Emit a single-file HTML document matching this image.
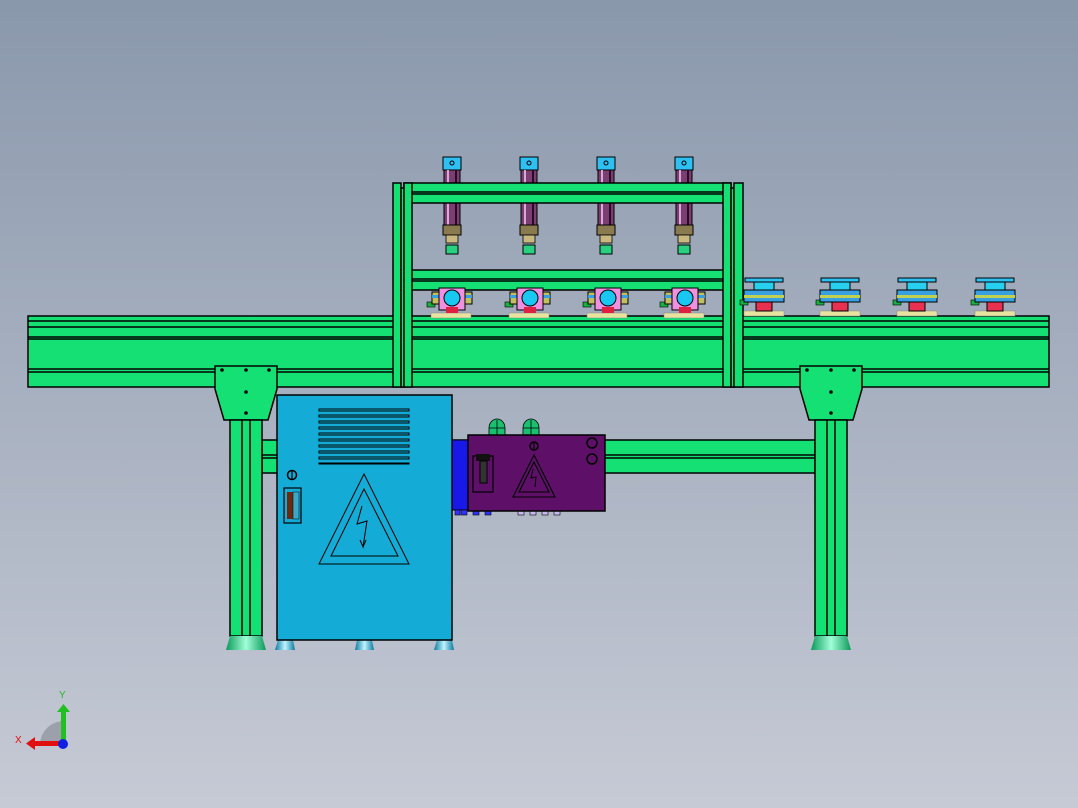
<!DOCTYPE html>
<html><head><meta charset="utf-8"><style>
html,body{margin:0;padding:0;width:1078px;height:808px;overflow:hidden}
svg{display:block}
</style></head><body>
<svg width="1078" height="808" viewBox="0 0 1078 808" xmlns="http://www.w3.org/2000/svg">
<defs>
<linearGradient id="bg" x1="0" y1="0" x2="0" y2="1">
<stop offset="0" stop-color="#8a98ac"/><stop offset="1" stop-color="#c6cad5"/>
</linearGradient>
<linearGradient id="foot" x1="0" x2="1"><stop offset="0" stop-color="#0c9a5a"/><stop offset="0.5" stop-color="#a0ffd8"/><stop offset="1" stop-color="#0c9a5a"/></linearGradient>
<linearGradient id="bfoot" x1="0" x2="1"><stop offset="0" stop-color="#0a7aa0"/><stop offset="0.5" stop-color="#c0f4ff"/><stop offset="1" stop-color="#0a7aa0"/></linearGradient>
<g id="cyl">
<rect x="0" y="0" width="18" height="13" fill="#2ec0f0" stroke="#000" stroke-width="1"/>
<circle cx="9" cy="6" r="2" fill="none" stroke="#000" stroke-width="1"/>
<rect x="1" y="13" width="16" height="62" fill="#7a3e70" stroke="#000" stroke-width="1"/>
<rect x="4" y="13" width="2" height="62" fill="#d7a8d8"/>
<rect x="12" y="13" width="2" height="62" fill="#2a0a28"/>
<rect x="0" y="68" width="18" height="10" fill="#8a7a50" stroke="#000" stroke-width="1"/>
<rect x="3" y="78" width="12" height="8" fill="#c8b880" stroke="#000" stroke-width="0.8"/>
<rect x="3" y="88" width="12" height="9" fill="#28d080" stroke="#000" stroke-width="1"/>
</g>
<g id="fix1">
<rect x="0" y="29" width="40" height="5" fill="#e8e4a0" stroke="#888" stroke-width="0.5"/>
<rect x="-4" y="18" width="8" height="5" fill="#18b040" stroke="#000" stroke-width="0.6"/>
<rect x="1" y="8" width="40" height="12" fill="#c0c060" stroke="#000" stroke-width="1"/>
<rect x="1" y="11" width="40" height="3" fill="#38a0e0"/>
<rect x="8" y="4" width="26" height="22" fill="#f090e0" stroke="#000" stroke-width="1"/>
<circle cx="21" cy="14" r="8" fill="#18c8f0" stroke="#000" stroke-width="1"/>
<rect x="15" y="23" width="12" height="6" fill="#e02040"/>
</g>
<g id="fix2">
<rect x="0" y="33" width="40" height="5" fill="#e8e4a0" stroke="#888" stroke-width="0.5"/>
<rect x="-4" y="22" width="8" height="5" fill="#18b040" stroke="#000" stroke-width="0.6"/>
<rect x="1" y="0" width="38" height="4" fill="#2ec0f0" stroke="#000" stroke-width="1"/>
<rect x="10" y="4" width="20" height="8" fill="#28d0f0" stroke="#000" stroke-width="1"/>
<rect x="0" y="12" width="40" height="12" fill="#38a0e0" stroke="#000" stroke-width="1"/>
<rect x="0" y="17" width="40" height="3" fill="#c0d050"/>
<rect x="12" y="24" width="16" height="9" fill="#e83050" stroke="#000" stroke-width="1"/>
</g>
</defs>
<rect width="1078" height="808" fill="url(#bg)"/>

<use href="#cyl" x="443" y="157"/>
<use href="#cyl" x="520" y="157"/>
<use href="#cyl" x="597" y="157"/>
<use href="#cyl" x="675" y="157"/>

<g stroke="#000" stroke-width="1.5">
<rect x="28" y="316" width="1021" height="71" fill="#14e074"/>
<line x1="28" y1="321" x2="1049" y2="321"/>
<line x1="28" y1="327" x2="1049" y2="327"/>
<line x1="28" y1="337" x2="1049" y2="337"/>
<line x1="28" y1="339" x2="1049" y2="339"/>
<line x1="28" y1="369" x2="1049" y2="369"/>
<line x1="28" y1="372" x2="1049" y2="372"/>
</g>

<g fill="#14e074" stroke="#000" stroke-width="1.5">
<rect x="404" y="183" width="327" height="20"/>
<line x1="404" y1="192" x2="731" y2="192"/><line x1="404" y1="194" x2="731" y2="194"/>
<rect x="404" y="270" width="327" height="20"/>
<line x1="404" y1="279" x2="731" y2="279"/><line x1="404" y1="281" x2="731" y2="281"/>
<rect x="393" y="183" width="8" height="204"/>
<rect x="401" y="188" width="3" height="199"/>
<rect x="404" y="183" width="8" height="204"/>
<rect x="723" y="183" width="8" height="204"/>
<rect x="731" y="188" width="3" height="199"/>
<rect x="734" y="183" width="9" height="204"/>
</g>

<use href="#fix1" x="431" y="284"/>
<use href="#fix1" x="509" y="284"/>
<use href="#fix1" x="587" y="284"/>
<use href="#fix1" x="664" y="284"/>
<use href="#fix2" x="744" y="278"/>
<use href="#fix2" x="820" y="278"/>
<use href="#fix2" x="897" y="278"/>
<use href="#fix2" x="975" y="278"/>

<g fill="#14e074" stroke="#000" stroke-width="1.5">
<rect x="262" y="440" width="553" height="33"/>
<line x1="262" y1="455" x2="815" y2="455"/><line x1="262" y1="458" x2="815" y2="458"/>
</g>

<g fill="#14e074" stroke="#000" stroke-width="1.5">
<path d="M215 366 H277 V389 L268 420 H224 L215 389 Z"/>
<rect x="230" y="420" width="32" height="216"/>
<line x1="242" y1="420" x2="242" y2="636"/><line x1="250" y1="420" x2="250" y2="636"/>
<path d="M800 366 H862 V389 L853 420 H809 L800 389 Z"/>
<rect x="815" y="420" width="32" height="216"/>
<line x1="827" y1="420" x2="827" y2="636"/><line x1="835" y1="420" x2="835" y2="636"/>
</g>
<path d="M230 636 H262 L266 650 H226 Z" fill="url(#foot)"/>
<path d="M815 636 H847 L851 650 H811 Z" fill="url(#foot)"/>
<g fill="#000"><circle cx="222" cy="370" r="1.8"/><circle cx="246" cy="370" r="1.8"/><circle cx="269" cy="370" r="1.8"/><circle cx="246" cy="392" r="1.8"/><circle cx="246" cy="413" r="1.8"/>
<circle cx="807" cy="370" r="1.8"/><circle cx="831" cy="370" r="1.8"/><circle cx="854" cy="370" r="1.8"/><circle cx="831" cy="392" r="1.8"/><circle cx="831" cy="413" r="1.8"/></g>

<rect x="452" y="440" width="18" height="70" fill="#1818e8" stroke="#000" stroke-width="1"/>
<g fill="#3030ff" stroke="#000" stroke-width="0.6"><rect x="455" y="510" width="5" height="5"/><rect x="461" y="510" width="6" height="5"/><rect x="473" y="510" width="6" height="5"/><rect x="485" y="510" width="6" height="5"/></g>
<g fill="#c8b8f0" stroke="#000" stroke-width="0.6"><rect x="518" y="510" width="6" height="5"/><rect x="530" y="510" width="6" height="5"/><rect x="542" y="510" width="6" height="5"/><rect x="554" y="510" width="6" height="5"/></g>
<g fill="#18c070" stroke="#000" stroke-width="0.8">
<path d="M489 435 V428 A8 9 0 0 1 505 428 V435 Z"/>
<path d="M523 435 V428 A8 9 0 0 1 539 428 V435 Z"/>
<path d="M497 420 V435 M489 428 H505 M531 420 V435 M523 428 H539" fill="none"/>
</g>

<rect x="468" y="435" width="137" height="76" fill="#5e1068" stroke="#000" stroke-width="1.5"/>
<rect x="473" y="456" width="20" height="36" fill="none" stroke="#000" stroke-width="1.2"/>
<rect x="476" y="454" width="14" height="7" fill="#111"/>
<rect x="480" y="461" width="7" height="22" fill="#333" stroke="#000"/>
<path d="M534 455 L513 497 H555 Z M534 462 L519 492 H549 Z" fill="none" stroke="#000" stroke-width="1.1"/>
<path d="M533 469 L531 478 L536 477 L535 487" fill="none" stroke="#000" stroke-width="1"/>
<circle cx="534" cy="446" r="4" fill="none" stroke="#000" stroke-width="1.5"/><line x1="534" y1="442" x2="534" y2="450" stroke="#000" stroke-width="1.2"/>
<circle cx="592" cy="443" r="5" fill="none" stroke="#000" stroke-width="1.5"/>
<circle cx="592" cy="459" r="5" fill="none" stroke="#000" stroke-width="1.5"/>

<path d="M278 640 H293 L295 650 H275 Z" fill="url(#bfoot)"/>
<path d="M357 640 H372 L374 650 H355 Z" fill="url(#bfoot)"/>
<path d="M437 640 H452 L454 650 H434 Z" fill="url(#bfoot)"/>
<rect x="277" y="395" width="175" height="245" fill="#14acd6" stroke="#000" stroke-width="1.5"/>
<g fill="none" stroke="#000" stroke-width="1">
<rect x="319" y="409" width="90" height="2"/><rect x="319" y="415" width="90" height="2"/><rect x="319" y="421" width="90" height="2"/><rect x="319" y="427" width="90" height="2"/><rect x="319" y="433" width="90" height="2"/><rect x="319" y="439" width="90" height="2"/><rect x="319" y="445" width="90" height="2"/><rect x="319" y="451" width="90" height="2"/><rect x="319" y="457" width="90" height="2"/><rect x="319" y="463" width="90" height="1"/>
<path d="M364 474 L319 564 H409 Z M364 489 L331 556 H398 Z"/>
<path d="M362 506 L357 524 L367 521 L363 547 L360 540 M363 547 L366 540"/>
</g>
<circle cx="292" cy="475" r="4.5" fill="none" stroke="#000" stroke-width="1.5"/><line x1="292" y1="470" x2="292" y2="480" stroke="#000" stroke-width="1.2"/>
<rect x="284" y="488" width="17" height="35" fill="#14acd6" stroke="#000" stroke-width="1.2"/>
<rect x="287" y="492" width="6" height="27" fill="#6a2a10"/>
<rect x="293" y="492" width="6" height="27" fill="#3aa8c8" stroke="#000" stroke-width="0.5"/>

<path d="M40 745 A24 24 0 0 1 64 721 V745 Z" fill="#9ca0aa"/>
<rect x="61" y="711" width="5" height="34" fill="#20c020"/>
<path d="M57 712 L63.5 704 L70 712 Z" fill="#20c020"/>
<rect x="34" y="741" width="30" height="5" fill="#e01010"/>
<path d="M35 737 L26 743.5 L35 750 Z" fill="#e01010"/>
<circle cx="63" cy="744" r="5" fill="#1020e0"/>
<text x="59" y="698" font-family="Liberation Sans, sans-serif" font-size="10" fill="#20c020">Y</text>
<text x="15" y="743" font-family="Liberation Sans, sans-serif" font-size="10" fill="#e01010">X</text>
</svg>
</body></html>
